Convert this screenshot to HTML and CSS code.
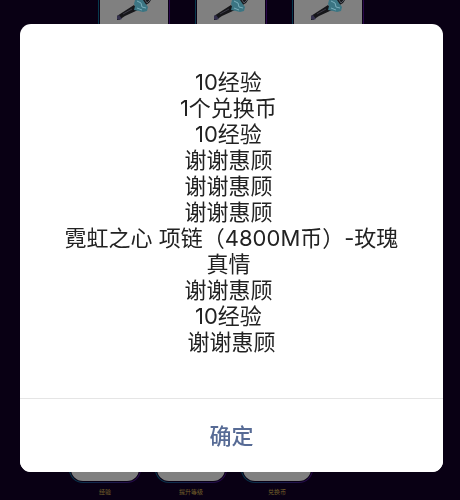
FILE: index.html
```html
<!DOCTYPE html>
<html lang="zh-CN">
  <head>
    <meta charset="UTF-8" />
    <meta name="viewport" content="width=device-width, initial-scale=1.0" />
    <title>抽奖结果</title>
    <link rel="stylesheet" href="styles.css">
  </head>
  <body>
    <svg class="defs" width="0" height="0" aria-hidden="true">
      <g id="sword">
        <path d="M17 16l3-2 14-9 4 5-13 6-6 4h-2z" fill="#161619" />
        <path d="M17 16l2-1 3 4-3 1-2-1z" fill="#34304c" />
        <path d="M23 14l9-5" stroke="#3b3945" stroke-width="1" />
        <path d="M35 0h16l-2 3-5 3-6-1z" fill="#19191d" />
        <path d="M35 0h8l2 3 3 4-1 4-4 1-4-1-5-1 1-4-1-2z" fill="#3b7583" />
        <path d="M37 1l4 2 1 4 4 1M37 8l5 2" stroke="#79aebb" stroke-width="1" fill="none" />
        <path d="M45 0l2 3 3-3" stroke="#545862" stroke-width="1" fill="none" />
      </g>
    </svg>

    <main class="page">
      <div class="prizes">
        <div class="prize"><svg class="prizeImg" viewBox="0 0 68 60"><use href="#sword" /></svg></div>
        <div class="prize"><svg class="prizeImg" viewBox="0 0 68 60"><use href="#sword" /></svg></div>
        <div class="prize"><svg class="prizeImg" viewBox="0 0 68 60"><use href="#sword" /></svg></div>
      </div>
      <div class="rewards">
        <div class="reward">
          <div class="rewardBox"></div>
          <p>经验</p>
        </div>
        <div class="reward">
          <div class="rewardBox"></div>
          <p>提升等级</p>
        </div>
        <div class="reward">
          <div class="rewardBox"></div>
          <p>兑换币</p>
        </div>
      </div>
    </main>

    <div class="mask">
      <div class="dialog" role="dialog" aria-modal="true">
        <p class="dialogText">
          10经验&nbsp;<br>
          1个兑换币&nbsp;<br>
          10经验&nbsp;<br>
          谢谢惠顾&nbsp;<br>
          谢谢惠顾&nbsp;<br>
          谢谢惠顾&nbsp;<br>
          霓虹之心 项链（4800M币）-玫瑰真情&nbsp;<br>
          谢谢惠顾&nbsp;<br>
          10经验&nbsp;<br>
          谢谢惠顾
        </p>
        <button class="confirm" type="button">确定</button>
      </div>
    </div>
  </body>
</html>
```

FILE: styles.css
```css
* {
  margin: 0;
  padding: 0;
  box-sizing: border-box;
  font-family: Inter, "Noto Sans CJK SC", sans-serif;
}
body {
  background-color: #090014;
  overflow: hidden;
}
.defs {
  display: block;
}
.page {
  min-height: 100vh;
  display: flex;
  flex-direction: column;
  justify-content: space-between;
}
.prizes {
  display: flex;
  justify-content: center;
  gap: 25px;
  padding-left: 2px;
}
.prize {
  width: 72px;
  height: 60px;
  padding: 0 1px;
  border-left: 1px solid #06394d;
  border-right: 1px solid #29064a;
}
.prizeImg {
  display: block;
  width: 100%;
  height: 100%;
  background-color: #808080;
}
.rewards {
  display: flex;
  gap: 14px;
  padding-left: 15%;
}
.reward {
  width: 72px;
  text-align: center;
}
.rewardBox {
  height: 60px;
  border: 1px solid transparent;
  border-radius: 14px;
  background: linear-gradient(#090014, #090014) padding-box,
    linear-gradient(90deg, #06394d, #29064a) border-box;
  position: relative;
}
.rewardBox::after {
  content: "";
  position: absolute;
  inset: 0 1px 1px;
  border-radius: 12px;
  background-color: #808080;
}
.reward p {
  color: #75612b;
  font-size: 6px;
  line-height: 17px;
}
.mask {
  position: fixed;
  inset: 0;
  display: flex;
  align-items: center;
  padding: 0 17px 4px 20px;
}
.dialog {
  width: 100%;
  background-color: #fff;
  border-radius: 11px;
  overflow: hidden;
}
.dialogText {
  padding: 45px 40px 43px;
  color: #222;
  font-size: 22px;
  line-height: 26px;
  text-align: center;
}
.confirm {
  display: block;
  width: 100%;
  height: 74px;
  padding-bottom: 4px;
  border: none;
  border-top: 1px solid #e5e5e5;
  background-color: #fff;
  color: #576b95;
  font-size: 22px;
  font-weight: 500;
  cursor: pointer;
}
```
